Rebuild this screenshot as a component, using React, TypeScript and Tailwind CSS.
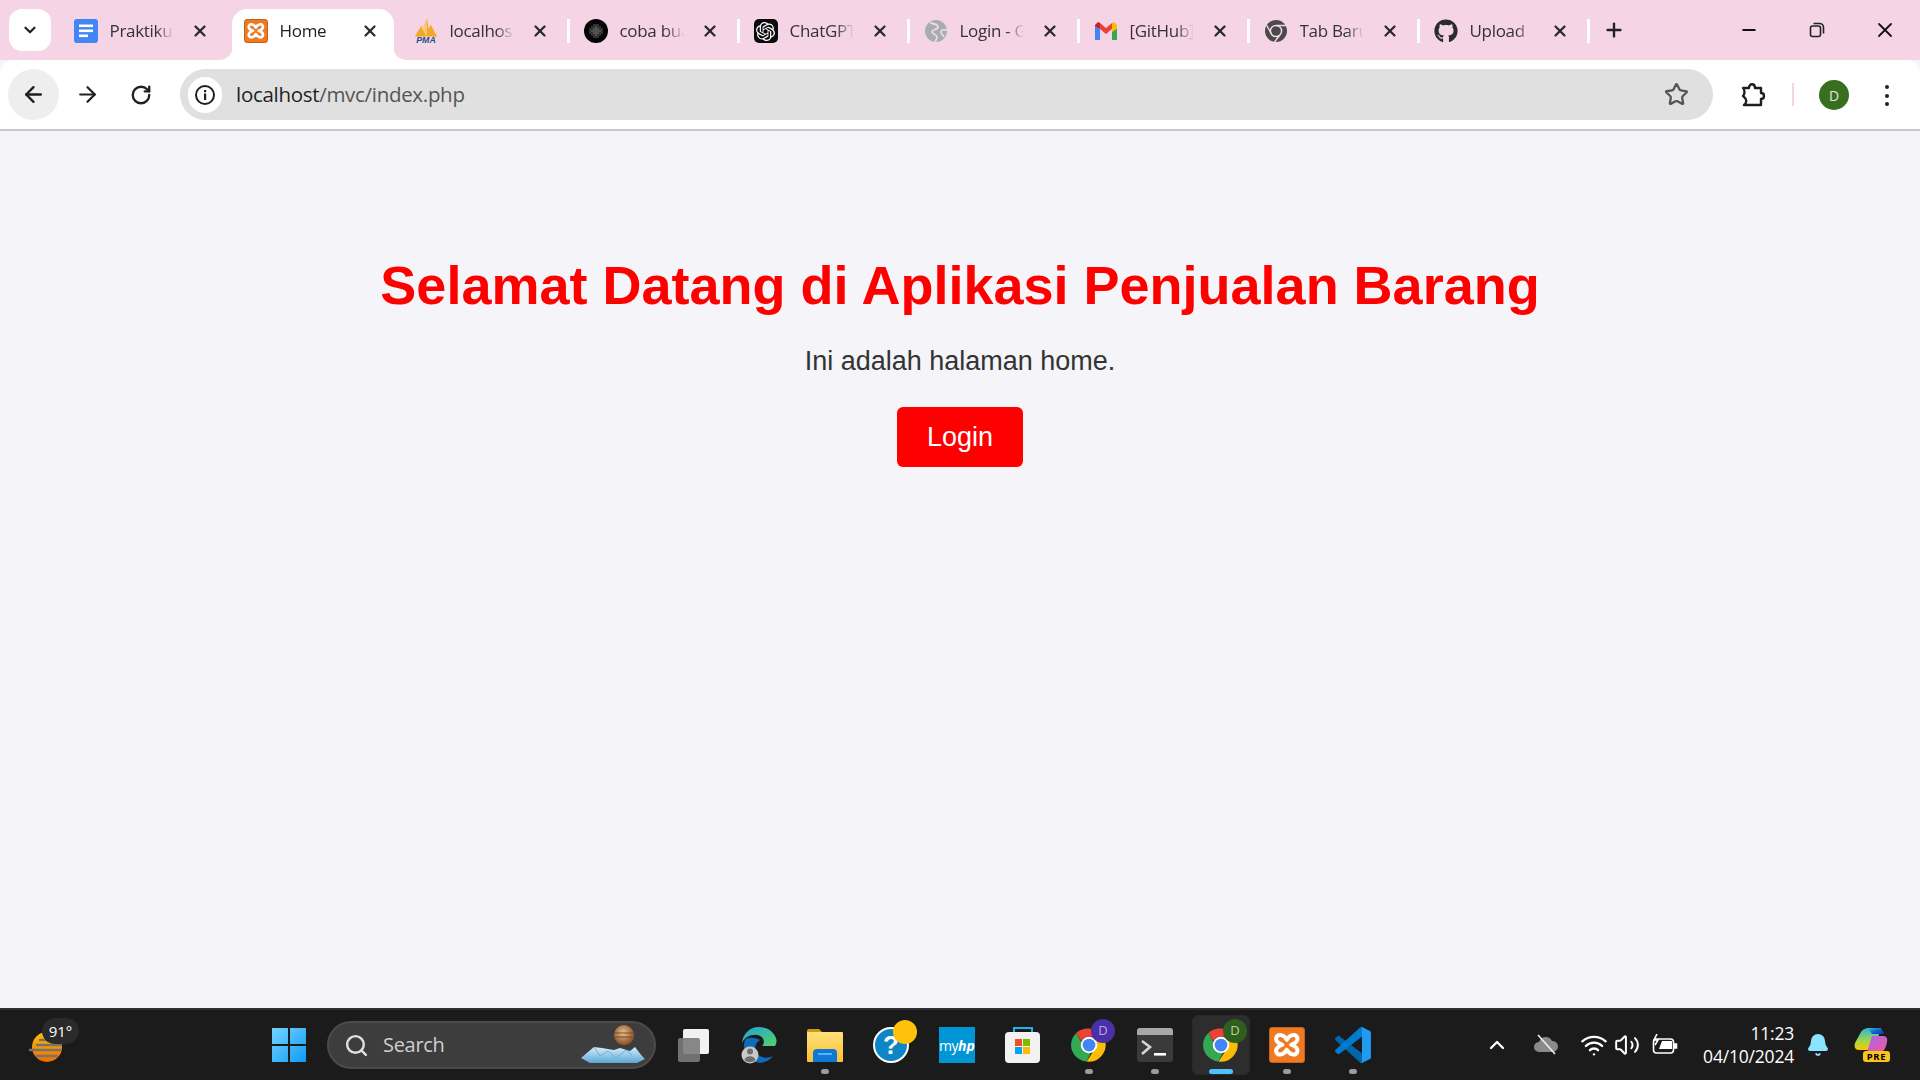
import React from "react";
import { X, ArrowLeft, ArrowRight, RotateCw, Star, Plus, Minus, ChevronDown, ChevronUp, Search, Bell, Volume2, Wifi } from "lucide-react";
import { FaGithub } from "react-icons/fa";
import { SiOpenai } from "react-icons/si";

const Chrome = ({ size = 40 }: { size?: number }) => (
  <svg width={size} height={size} viewBox="0 0 48 48">
    <path d="M24 2a22 22 0 0 1 19 11H24a11 11 0 0 0-10 6L7 8a22 22 0 0 1 17-6z" fill="#ea4335" />
    <path d="M7 8l9 16a9 9 0 0 0 11 9l-6 13A22 22 0 0 1 7 8z" fill="#34a853" />
    <path d="M43 13a22 22 0 0 1-22 33l10-16a10 10 0 0 0 1-11l-1-6z" fill="#fbbc04" />
    <circle cx="24" cy="24" r="11" fill="#fff" />
    <circle cx="24" cy="24" r="8.5" fill="#4285f4" />
  </svg>
);

const GrayChrome = () => (
  <svg width="24" height="24" viewBox="0 0 24 24">
    <circle cx="12" cy="12" r="11" fill="#4a4a4a" />
    <circle cx="12" cy="12" r="5.6" fill="none" stroke="#f5d5e5" strokeWidth="1.5" />
    <circle cx="12" cy="12" r="3.6" fill="#4a4a4a" />
    <path d="M12 6.500h10M7.300 14.700 2.500 6M15.500 16.500 10.500 23" stroke="#f5d5e5" strokeWidth="1.400" fill="none" />
  </svg>
);

const Xampp = ({ size = 24 }: { size?: number }) => (
  <span className="flex items-center justify-center rounded-[3px] border border-[#c9601c] bg-[#ee7a22]" style={{ width: size, height: size }}>
    <svg width={size * 0.82} height={size * 0.82} viewBox="0 0 24 24" fill="none" stroke="#fff" strokeWidth="3.200" strokeLinejoin="round">
      <path d="M12 8C10 4 5 2.500 3.500 6 2.500 9 5.500 11 8.500 12 5.500 13 2.500 15 3.500 18 5 21.500 10 20 12 16 14 20 19 21.500 20.500 18 21.500 15 18.500 13 15.500 12 18.500 11 21.500 9 20.500 6 19 2.500 14 4 12 8Z" />
    </svg>
  </span>
);

const Docs = () => (
  <svg width="24" height="24" viewBox="0 0 24 24">
    <rect width="24" height="24" rx="3" fill="#4285f4" />
    <rect x="5" y="5.500" width="14" height="2.600" fill="#fff" />
    <rect x="5" y="10.500" width="14" height="2.600" fill="#fff" />
    <rect x="5" y="15.500" width="9" height="2.600" fill="#fff" />
  </svg>
);

const Pma = () => (
  <svg width="26" height="28" viewBox="0 0 26 28">
    <path d="M1 20 8 8l1 5 5-13 2 12 2-5 7 13z" fill="#f5a623" />
    <path d="M9 13l5-13v20z" fill="#f8c877" />
    <text x="13" y="27" textAnchor="middle" fontSize="9.500" fontWeight="700" fontStyle="italic" fill="#24508f" fontFamily="Liberation Sans">PMA</text>
  </svg>
);

const Dots = () => {
  const cells: React.ReactNode[] = [];
  for (let x = 0; x < 7; x++) for (let y = 0; y < 7; y++) {
    const dx = x - 3, dy = y - 3;
    if (dx * dx + dy * dy <= 10) cells.push(<circle key={`${x}-${y}`} cx={6 + x * 2} cy={6 + y * 2} r="0.75" fill={dx * dx + dy * dy < 5 ? "#c4c4c4" : "#777"} />);
  }
  return <svg width="24" height="24" viewBox="0 0 24 24"><circle cx="12" cy="12" r="12" fill="#050505" />{cells}</svg>;
};

const Gpt = () => (
  <span className="flex h-6 w-6 items-center justify-center rounded-[5px] bg-[#0b0b0b]"><SiOpenai color="#fff" size={19} /></span>
);

const Globe = () => (
  <svg width="24" height="24" viewBox="0 0 24 24">
    <circle cx="12" cy="12" r="11" fill="#a6adb3" />
    <path d="M6 3c2 3 8 1 8 5 0 3-6 2-6 5 0 2 5 2 5 5 0 2-1 3-2 5" stroke="#f5d5e5" strokeWidth="1.800" fill="none" />
    <path d="M23 11c-3 0-6-1-6 2 0 2 2 3 3 5" stroke="#f5d5e5" strokeWidth="1.800" fill="none" />
  </svg>
);

const Gmail = () => (
  <svg width="24" height="24" viewBox="0 0 24 24">
    <path d="M1 6v15h5V10z" fill="#4285f4" />
    <path d="M23 6v15h-5V10z" fill="#34a853" />
    <path d="M6 4l6 5 6-5v6l-6 5-6-5z" fill="#ea4335" />
    <path d="M18 4l2-1 3 3v4l-5 3z" fill="#fbbc04" />
    <path d="M1 6l3-3 2 1v6l-5-3z" fill="#c5221f" />
  </svg>
);

const tabs: { title: string; icon: React.ReactNode; active?: boolean; sep?: boolean }[] = [
  { title: "Praktikum", icon: <Docs /> },
  { title: "Home", icon: <Xampp />, active: true },
  { title: "localhost", icon: <Pma />, sep: true },
  { title: "coba buat", icon: <Dots />, sep: true },
  { title: "ChatGPT", icon: <Gpt />, sep: true },
  { title: "Login - Git", icon: <Globe />, sep: true },
  { title: "[GitHub]", icon: <Gmail />, sep: true },
  { title: "Tab Baru", icon: <GrayChrome />, sep: true },
  { title: "Upload", icon: <FaGithub size={24} color="#2b2b2b" />, sep: true },
];

const Tab = ({ title, icon, active, sep }: { title: string; icon: React.ReactNode; active?: boolean; sep?: boolean }) => (
  <div className="relative flex h-[51px] w-[170px] shrink-0 items-center pb-[7px]">
    {active && (
      <>
        <div className="absolute inset-y-0 left-0 w-[162px] rounded-t-[15px] bg-white" />
        <svg className="absolute bottom-0 -left-[13px]" width="14" height="14" viewBox="0 0 14 14"><path d="M14 0v14H0c8 0 14-6 14-14z" fill="#fff" /></svg>
        <svg className="absolute bottom-0 left-[161px]" width="14" height="14" viewBox="0 0 14 14"><path d="M0 0v14h14C6 14 0 8 0 0z" fill="#fff" /></svg>
      </>
    )}
    <div className="relative ml-3 flex h-6 w-6 shrink-0 items-center justify-center">{icon}</div>
    <div className="relative ml-3 w-[64px] overflow-hidden whitespace-nowrap text-[17px] leading-6 text-[#333] [mask-image:linear-gradient(to_right,black_72%,transparent_100%)] font-['Open_Sans','Noto_Sans',sans-serif] tracking-[-0.3px]">
      {active ? <span className="text-[#222]">{title}</span> : title}
    </div>
    <X className="relative ml-[17px] shrink-0 text-[#2a2a2a]" size={18} strokeWidth={3} />
    {sep && <div className="absolute right-[2px] top-[10px] h-6 w-[2.5px] bg-white" />}
  </div>
);

const Puzzle = () => (
  <svg width="26" height="26" viewBox="0 0 26 26" fill="none" stroke="#1f1f1f" strokeWidth="2.400" strokeLinejoin="round">
    <path d="M3 6h6c0-5 6-5 6 0h6v5c4 0 4 6 0 6v6H4c3-2 3-6 0-8l-1-1c2-2 2-6 0-8z" />
  </svg>
);

const Restore = () => (
  <svg width="16" height="16" viewBox="0 0 16 16" fill="none" stroke="#222" strokeWidth="1.600">
    <rect x="1.500" y="4" width="10" height="10.500" rx="2" />
    <path d="M4.500 1.500h6a4 4 0 0 1 4 4v6" />
  </svg>
);

const Sun = () => (
  <svg width="36" height="32" viewBox="0 0 36 32">
    <defs><linearGradient id="s" x1="0" y1="0" x2="0" y2="1"><stop offset="0" stopColor="#ffc107" /><stop offset="1" stopColor="#ee6c00" /></linearGradient></defs>
    <circle cx="20" cy="16" r="15" fill="url(#s)" />
    <path d="M13 9h18M3 19h30M10 14h24M10 25h20" stroke="#77736c" strokeWidth="2.400" strokeLinecap="round" />
  </svg>
);

const Start = () => (
  <svg width="36" height="36" viewBox="0 0 36 36">
    <defs><linearGradient id="w" x1="0" y1="0" x2="1" y2="1"><stop offset="0" stopColor="#74d4ff" /><stop offset="1" stopColor="#0f9bf5" /></linearGradient></defs>
    <path d="M1 1h16v16H1zM19 1h16v16H19zM1 19h16v16H1zM19 19h16v16H19z" fill="url(#w)" />
  </svg>
);

const SearchArt = () => (
  <svg width="66" height="38" viewBox="0 0 66 38">
    <defs>
      <radialGradient id="pl" cx=".45" cy=".4"><stop offset="0" stopColor="#e9c39b" /><stop offset="1" stopColor="#9a5f2f" /></radialGradient>
      <linearGradient id="ice" x1="0" y1="0" x2="0" y2="1"><stop offset="0" stopColor="#d6eefa" /><stop offset="1" stopColor="#5ba6d6" /></linearGradient>
    </defs>
    <circle cx="44" cy="10" r="10" fill="url(#pl)" />
    <path d="M34 8h20M35 12h18" stroke="#7b4a22" strokeWidth="1" />
    <path d="M1 33 8 27l6-5 8 1 12 2 6-2 10 3 5-4 7 9 3 3-8 4H10z" fill="url(#ice)" />
    <path d="M14 22l6 9 8-5 8 7 10-8 6 5" stroke="#6fb1d9" fill="none" />
  </svg>
);

const TaskView = () => (
  <div className="relative h-[33px] w-[31px]">
    <div className="absolute right-0 top-0 h-[25px] w-[26px] rounded-[2px] bg-[#f2f2f2]" />
    <div className="absolute bottom-0 left-0 h-[24px] w-[22px] rounded-[2px] bg-[#7b7b7b]/90" />
  </div>
);

const Edge = () => (
  <svg width="36" height="38" viewBox="0 0 36 38">
    <defs>
      <linearGradient id="e1" x1="0" y1="0" x2="1" y2="1"><stop offset="0" stopColor="#1fa2d8" /><stop offset="1" stopColor="#54d36a" /></linearGradient>
    </defs>
    <path d="M18 1C8 1 2 8 1 17c3-6 9-9 15-8 8 1 8 9 5 11h13c2-3 2-7 0-10-3-6-9-9-16-9z" fill="url(#e1)" />
    <path d="M4 14c-3 8 1 18 10 22 6 2 14 0 18-6-6 3-14 2-17-4-2-5 0-10 4-12-6-3-12-3-15 0z" fill="#0f6cbd" />
    <circle cx="9" cy="29" r="8.500" fill="#c9c9c9" />
    <circle cx="9" cy="25.500" r="3" fill="#6f6f6f" />
    <path d="M3.500 34c1-5 10-5 11 0-3 3-8 3-11 0z" fill="#6f6f6f" />
  </svg>
);

const Folder = () => (
  <svg width="36" height="36" viewBox="0 0 36 36">
    <defs><linearGradient id="f" x1="0" y1="0" x2="0" y2="1"><stop offset="0" stopColor="#ffe07a" /><stop offset="1" stopColor="#fcc02e" /></linearGradient></defs>
    <path d="M0 4a2 2 0 0 1 2-2h10l4 4h-16z" fill="#d39a0c" />
    <rect y="5" width="36" height="30" rx="1" fill="url(#f)" />
    <path d="M6 35V26a4 4 0 0 1 4-4h16a4 4 0 0 1 4 4v9z" fill="#0f78d4" />
    <rect x="11" y="26" width="14" height="2" fill="#5ab2f0" />
  </svg>
);

const Help = () => (
  <div className="relative h-9 w-9">
    <svg width="36" height="36" viewBox="0 0 36 36">
      <circle cx="18" cy="18" r="17" fill="#0d86c8" stroke="#fff" strokeWidth="2" />
      <text x="18" y="27" textAnchor="middle" fontSize="26" fontWeight="700" fill="#fff" fontFamily="Liberation Sans">?</text>
    </svg>
    <div className="absolute -right-[8px] -top-[7px] h-6 w-6 rounded-full bg-[#ffc10b]" />
  </div>
);

const MyHp = () => (
  <div className="flex h-9 w-9 items-center justify-center bg-[#0096d6] text-[14px] text-white font-['Open_Sans',sans-serif]">
    <span className="tracking-[-0.5px]">my</span><span className="font-bold italic">hp</span>
  </div>
);

const Store = () => (
  <svg width="36" height="38" viewBox="0 0 36 38">
    <path d="M9 6V2h18v4" stroke="#20b4e8" strokeWidth="2" fill="none" />
    <rect y="6" width="35" height="31" rx="4" fill="#f2f2f2" />
    <rect x="10" y="13" width="7" height="7" fill="#f25022" />
    <rect x="18" y="13" width="7" height="7" fill="#7fba00" />
    <rect x="10" y="21" width="7" height="7" fill="#00a4ef" />
    <rect x="18" y="21" width="7" height="7" fill="#ffb900" />
  </svg>
);

const Terminal = () => (
  <svg width="36" height="36" viewBox="0 0 36 36">
    <rect y="1" width="36" height="34" rx="3" fill="#3a3a3a" />
    <path d="M3 1h30a3 3 0 0 1 3 3v4H0V4a3 3 0 0 1 3-3z" fill="#a8a8a8" />
    <path d="M5 14l8 6-8 7" stroke="#d5d5d5" strokeWidth="2.600" fill="none" />
    <rect x="17" y="26" width="12" height="2.600" fill="#fff" />
  </svg>
);

const Code = () => (
  <svg width="36" height="36" viewBox="0 0 100 100">
    <path d="M96.400 89.200 75.800 99.100c-2.400 1.200-5.200.7-7.100-1.200L1.300 36.500c-1.800-1.700-1.800-4.500 0-6.200l5.400-4.900c1.500-1.300 3.600-1.400 5.200-.3L93.100 86.600c2.700 2.100 6.600.1 6.600-3.300v.2c0 2.400-1.400 4.700-3.300 5.700z" fill="#0065a9" />
    <path d="M96.400 10.800 75.800.9c-2.400-1.200-5.200-.7-7.100 1.200L1.300 63.500c-1.800 1.700-1.800 4.500 0 6.200l5.400 4.900c1.500 1.300 3.600 1.400 5.200.3L93.100 13.400c2.700-2.100 6.600-.1 6.600 3.300v-.2c0-2.400-1.400-4.700-3.300-5.700z" fill="#007acc" />
    <path d="M75.800 99.100c-2.400 1.200-5.200.7-7.100-1.200 2.300 2.300 6.200.7 6.200-2.600V4.700c0-3.300-3.900-4.900-6.200-2.600 1.900-1.900 4.700-2.400 7.100-1.200l20.600 9.900c2.100 1 3.400 3.100 3.400 5.500v67.400c0 2.400-1.300 4.500-3.400 5.500z" fill="#1f9cf0" />
  </svg>
);

const ChromeBadge = ({ color, text }: { color: string; text: string }) => (
  <div className="relative h-9 w-9">
    <Chrome size={36} />
    <div className="absolute -right-[8px] -top-[8px] flex h-6 w-6 items-center justify-center rounded-full text-[13px] font-['Open_Sans',sans-serif]" style={{ backgroundColor: color, color: text }}>D</div>
  </div>
);

const Dock = ({ children, dot, active }: { children: React.ReactNode; dot?: boolean; active?: boolean }) => (
  <div className="relative flex h-[60px] w-[66px] shrink-0 items-center justify-center">
    {active && <div className="absolute inset-x-[4px] inset-y-0 rounded-[6px] border border-[#2a2a2a] bg-[#2d2d2d]" />}
    <div className="relative">{children}</div>
    {dot && <div className="absolute bottom-[1px] left-[29px] h-[5px] w-2 rounded-full bg-[#9b9b9b]" />}
    {active && <div className="absolute bottom-[1px] left-[21px] h-[5px] w-6 rounded-full bg-[#4cc2ff]" />}
  </div>
);

const Cloud = () => (
  <svg width="26" height="22" viewBox="0 0 26 22">
    <path d="M6 18a5 5 0 0 1 0-10 7 7 0 0 1 13-1 5.500 5.500 0 0 1 1 11z" fill="#8a8a8a" />
    <path d="M5 1l17 19" stroke="#f0f0f0" strokeWidth="1.600" />
  </svg>
);

const Battery = () => (
  <svg width="26" height="22" viewBox="0 0 26 22" fill="none" stroke="#fff" strokeWidth="1.600">
    <rect x="1.500" y="5" width="20" height="14" rx="3" />
    <path d="M22 10h2.500v4H22" fill="#fff" />
    <path d="M7 15h13V7H10z" fill="#fff" stroke="none" />
    <path d="M5 0 2 6h4l-3 5" stroke="#fff" fill="none" />
  </svg>
);

const Copilot = () => (
  <div className="relative h-[34px] w-[36px]">
    <svg width="34" height="26" viewBox="0 0 34 26">
      <defs>
        <linearGradient id="c1" x1="0" y1="0" x2="1" y2="1"><stop offset="0" stopColor="#30c5ee" /><stop offset=".5" stopColor="#1560d8" /><stop offset="1" stopColor="#0b3aa5" /></linearGradient>
        <linearGradient id="c2" x1="0" y1="0" x2="0" y2="1"><stop offset="0" stopColor="#2bb5d9" /><stop offset=".6" stopColor="#a5d845" /><stop offset="1" stopColor="#ffc400" /></linearGradient>
        <linearGradient id="c3" x1="0" y1="0" x2="1" y2="1"><stop offset="0" stopColor="#a566e8" /><stop offset="1" stopColor="#f05a9b" /></linearGradient>
      </defs>
      <path d="M7 4C9 1 12 0 14 0h13l-7 22H5C1 22 0 19 1 15z" fill="url(#c2)" />
      <path d="M14 0h10c3 0 5 2 6 6H18z" fill="url(#c1)" />
      <path d="M18 8h11c3 0 5 2 4 6-1 6-3 10-7 10H13z" fill="url(#c3)" />
    </svg>
    <div className="absolute bottom-0 right-0 flex h-[11px] w-[27px] items-center justify-center rounded-[3px] bg-[#fcc419] text-[9.5px] font-bold leading-none tracking-[0.6px] text-black font-['Noto_Sans',sans-serif]">PRE</div>
  </div>
);

export default function App() {
  return (
    <div className="flex h-[1080px] w-[1920px] flex-col overflow-hidden bg-[#f4f4f9] font-['Liberation_Sans',sans-serif]">
      {/* tab strip */}
      <div className="flex h-[60px] shrink-0 items-end bg-[#f5d5e5]">
        <div className="mb-[9px] ml-[9px] mr-[10.5px] flex h-[42px] w-[42px] shrink-0 items-center justify-center rounded-[13px] bg-white">
          <ChevronDown size={18} strokeWidth={3} className="text-[#222]" />
        </div>
        {tabs.map((t) => <Tab key={t.title} {...t} />)}
        <div className="mb-[9px] ml-[8.5px] flex h-[42px] w-[28px] items-center justify-center">
          <Plus size={22} strokeWidth={2.6} className="text-[#222]" />
        </div>
        <div className="flex-1" />
        <div className="mb-[10px] flex h-10 items-center">
          <div className="flex w-[68px] justify-center"><Minus size={20} strokeWidth={2.2} className="text-[#111]" /></div>
          <div className="flex w-[68px] justify-center"><Restore /></div>
          <div className="mr-[1px] flex w-[68px] justify-center"><X size={24} strokeWidth={1.8} className="text-[#111]" /></div>
        </div>
      </div>

      {/* toolbar */}
      <div className="flex h-[71px] shrink-0 items-start rounded-t-[14px] border-b-[2px] border-[#c8c8c8] bg-white pt-[9px]">
        <div className="ml-2 flex h-[51px] w-[51px] shrink-0 items-center justify-center rounded-full bg-[#eeeeee]"><ArrowLeft size={25} strokeWidth={2.3} className="text-[#202020]" /></div>
        <div className="flex h-[51px] w-[56px] shrink-0 items-center justify-center"><ArrowRight size={25} strokeWidth={2.1} className="text-[#202020]" /></div>
        <div className="flex h-[51px] w-[52px] shrink-0 items-center justify-center"><RotateCw size={22} strokeWidth={2.5} className="text-[#202020]" /></div>
        <div className="ml-[13px] flex h-[51px] w-[1533px] shrink-0 items-center rounded-full bg-[#e0e0e0] pl-2 pr-[24px]">
          <div className="flex h-[36px] w-[34px] shrink-0 items-center justify-center rounded-full bg-white">
            <svg width="22" height="22" viewBox="0 0 22 22" fill="none"><circle cx="11" cy="11" r="9" stroke="#1f1f1f" strokeWidth="2" /><rect x="10" y="9.500" width="2.200" height="6.500" fill="#1f1f1f" /><rect x="10" y="6" width="2.200" height="2.200" fill="#1f1f1f" /></svg>
          </div>
          <div className="ml-[14px] text-[20.5px] tracking-[-0.3px] font-['Open_Sans','Noto_Sans',sans-serif] text-[#555]"><span className="text-[#1f1f1f]">localhost</span>/mvc/index.php</div>
          <div className="flex-1" />
          <Star size={25} strokeWidth={2.2} className="text-[#555]" />
        </div>
        <div className="ml-[27px] flex h-[51px] w-[26px] items-center justify-center"><Puzzle /></div>
        <div className="ml-[26px] mt-[14px] h-[23px] w-[2px] bg-[#f5d5e5]" />
        <div className="ml-[25px] mt-[11px] flex h-[30px] w-[30px] items-center justify-center rounded-full bg-[#386f1f] text-[14px] text-[#e6e6e6] font-['Open_Sans',sans-serif]">D</div>
        <div className="ml-[36px] mt-[16px] flex h-[21px] flex-col justify-between">
          <div className="h-1 w-1 rounded-full bg-[#222]" /><div className="h-1 w-1 rounded-full bg-[#222]" /><div className="h-1 w-1 rounded-full bg-[#222]" />
        </div>
      </div>

      {/* page */}
      <main className="flex flex-1 flex-col items-center pt-[122px] text-center">
        <h1 className="text-[54px] font-bold leading-[64px] text-[#ff0000]">Selamat Datang di Aplikasi Penjualan Barang</h1>
        <p className="mt-[28px] text-[27px] leading-8 text-[#333333]">Ini adalah halaman home.</p>
        <button className="mt-[30px] h-[60px] w-[126px] rounded-[6px] bg-[#ff0000] text-[27px] text-white">Login</button>
      </main>

      {/* taskbar */}
      <div className="flex h-[72px] shrink-0 items-center border-t-[2px] border-[#303030] bg-[#1b1b1b]">
        <div className="relative h-[60px] w-[256px] shrink-0">
          <div className="absolute left-[27px] top-[16px]"><Sun /></div>
          <div className="absolute left-[42px] top-[3px] flex h-[26px] w-[37px] items-center justify-center rounded-full bg-[#2a2a2a] text-[15px] text-white font-['Open_Sans',sans-serif]">91°</div>
        </div>
        <div className="flex w-[66px] shrink-0 justify-center"><Start /></div>
        <div className="ml-[5px] flex h-[48px] w-[329px] shrink-0 items-center rounded-full border-[2px] border-[#4b4b4b] bg-[#3d3d3d] pl-[15px]">
          <Search size={25} strokeWidth={2.3} className="text-[#e0e0e0]" />
          <span className="ml-[14px] text-[20px] text-[#cfcfcf] font-['Open_Sans',sans-serif] tracking-[-0.3px]">Search</span>
          <div className="flex-1" />
          <div className="mr-[8px] -mt-[2px]"><SearchArt /></div>
        </div>
        <div className="ml-[4px] flex">
          <Dock><TaskView /></Dock>
          <Dock><Edge /></Dock>
          <Dock dot><Folder /></Dock>
          <Dock><Help /></Dock>
          <Dock><MyHp /></Dock>
          <Dock><Store /></Dock>
          <Dock dot><ChromeBadge color="#4a2fa5" text="#b9a8f0" /></Dock>
          <Dock dot><Terminal /></Dock>
          <Dock active><ChromeBadge color="#2f5f1c" text="#b8d0a8" /></Dock>
          <Dock dot><Xampp size={36} /></Dock>
          <Dock dot><Code /></Dock>
        </div>
        <div className="flex-1" />
        <div className="flex items-center">
          <ChevronUp size={24} strokeWidth={2.3} className="text-white" />
          <div className="ml-[23px] flex w-[28px] justify-center"><Cloud /></div>
          <Wifi className="ml-[20px] text-white" size={28} strokeWidth={2} />
          <Volume2 className="ml-[6px] text-white" size={26} strokeWidth={1.8} />
          <div className="ml-[12px]"><Battery /></div>
          <div className="ml-[25px] flex flex-col items-end text-[17.5px] leading-[23px] text-white font-['Open_Sans',sans-serif] tracking-[-0.2px]">
            <span>11:23</span><span>04/10/2024</span>
          </div>
          <Bell className="ml-[12px] text-[#8be4ff]" fill="#8be4ff" size={24} />
          <div className="ml-[24px] mr-[30px]"><Copilot /></div>
        </div>
      </div>
    </div>
  );
}
